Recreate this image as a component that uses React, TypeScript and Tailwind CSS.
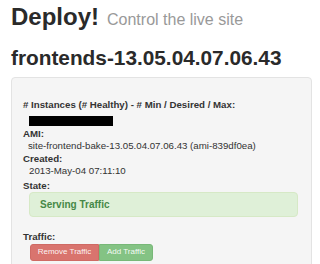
export default function App() {
  return (
    <div className="h-[264px] overflow-hidden bg-white pl-[11px] pr-[8px] font-['Liberation_Sans',Arial,sans-serif] text-[#333]">
      <h1 className="flex items-baseline gap-[8px] pt-[3px] text-[24px] font-bold leading-[28px] text-[#2a2a2a]">
        Deploy!
        <small className="text-[16px] font-normal text-[#999]">Control the live site</small>
      </h1>
      <h2 className="mt-[12px] text-[20.8px] font-bold leading-[24px] text-[#2a2a2a]">frontends-13.05.04.07.06.43</h2>
      <div className="mt-[7px] h-[200px] rounded-[4px] border border-[#e3e3e3] bg-[#f5f5f5] pl-[11px] pt-[21px] text-[9.7px] leading-[12.5px]">
        <dl>
          <dt className="font-bold">
            # Instances (# Healthy) - # Min / Desired / Max:
          </dt>
          <dd className="ml-[6px] mt-[4px] h-[10px] w-[84px] bg-black" />
          <dt className="mt-[2px] font-bold">AMI:</dt>
          <dd className="ml-[5px]">site-frontend-bake-13.05.04.07.06.43 (ami-839df0ea)</dd>
          <dt className="font-bold">Created:</dt>
          <dd className="ml-[6px]">2013-May-04 07:11:10</dd>
          <dt className="mt-[2px] font-bold">State:</dt>
          <dd className="ml-[6px]">
            <div className="w-[269px] rounded-[4px] border border-[#d6e9c6] bg-[#dff0d8] py-[5px] pl-[10px] text-[10px] font-bold leading-[13px] text-[#468847]">
              Serving Traffic
            </div>
          </dd>
          <dt className="mt-[14px] font-bold">Traffic:</dt>
          <dd className="ml-[7px] flex">
            <button className="h-[17px] w-[69px] rounded-l-[3px] border border-[#cf6a64] bg-[#d9746e] text-[8px] text-white/95">
              Remove Traffic
            </button>
            <button className="h-[17px] w-[54px] rounded-r-[3px] border border-[#78b878] bg-[#84c384] text-[8px] text-white/95">
              Add Traffic
            </button>
          </dd>
        </dl>
      </div>
    </div>
  );
}
